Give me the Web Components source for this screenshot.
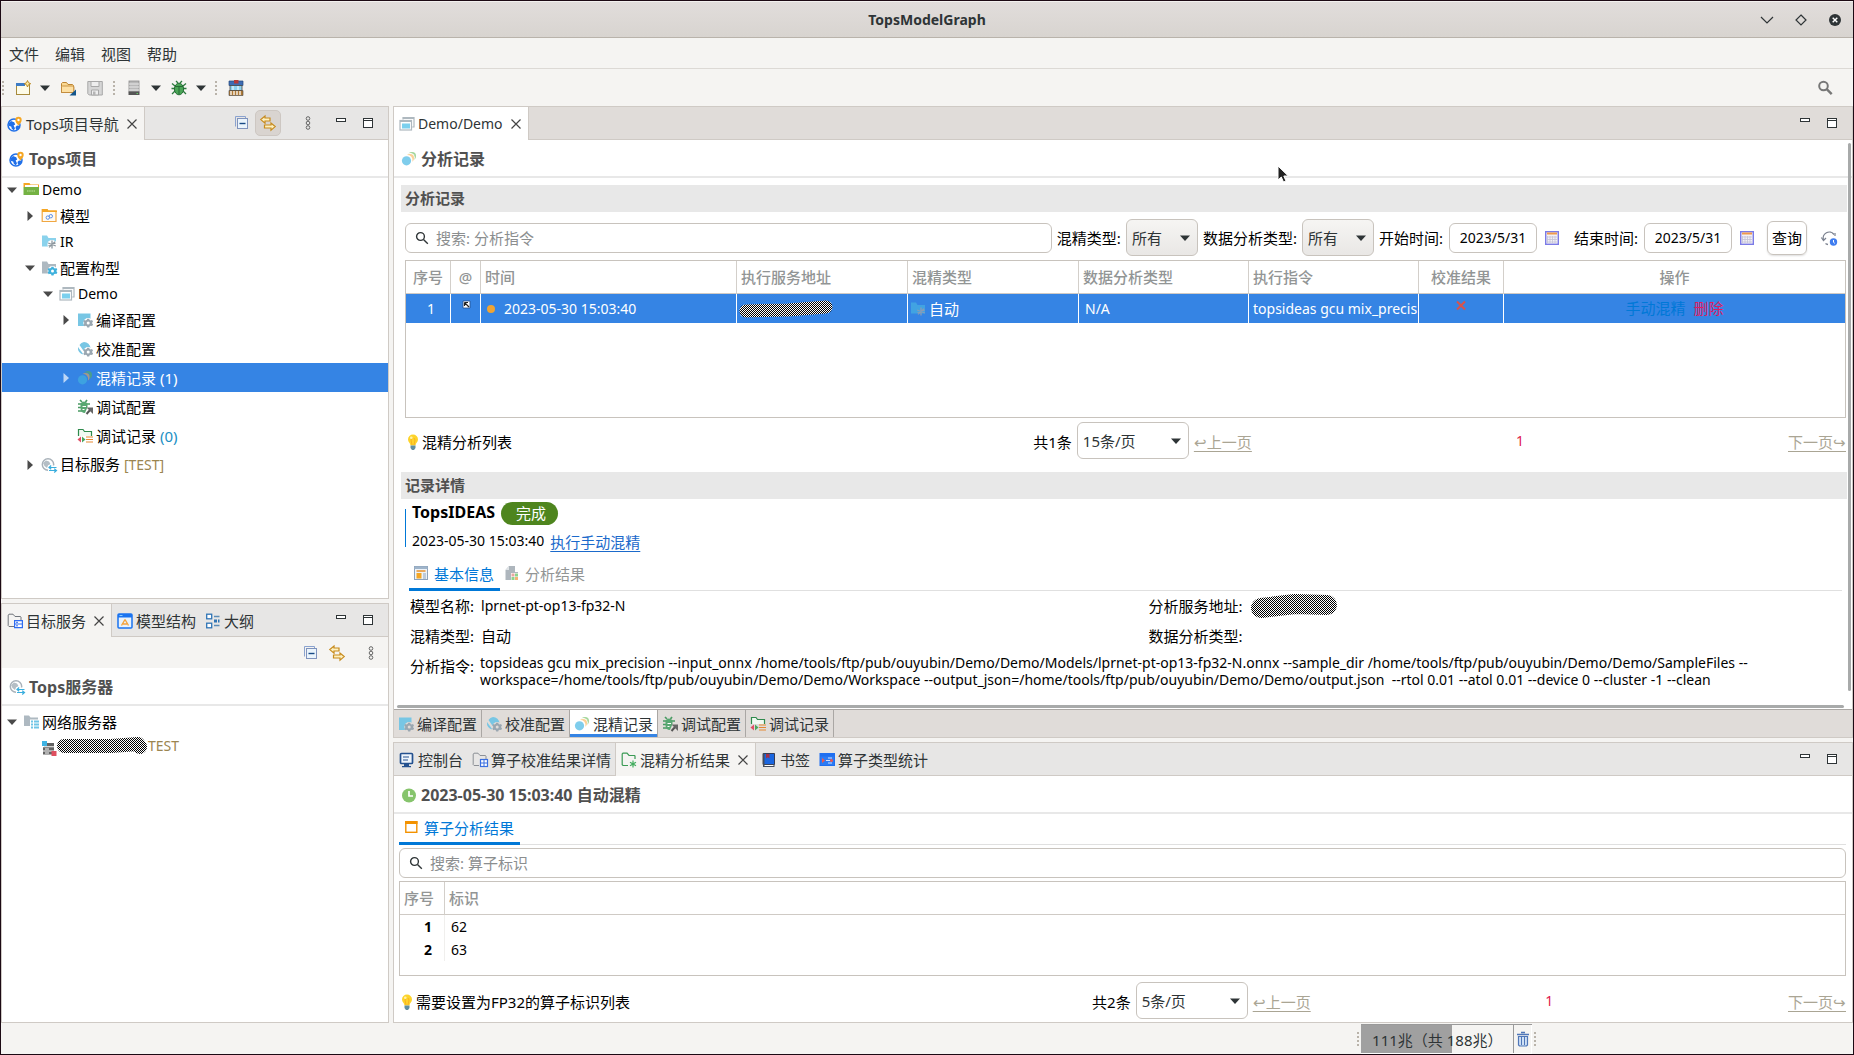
<!DOCTYPE html>
<html lang="zh-CN">
<head>
<meta charset="utf-8">
<title>TopsModelGraph</title>
<style>
html, body { margin: 0; height: 100%; }
body { background: #1c0a14; }
</style>
</head>
<body>
<tops-app></tops-app>
<script>
const SHARED = `
*, *::before, *::after { box-sizing: border-box; }
:host { display: block; box-sizing: border-box; }
button, input, select { font: inherit; color: inherit; margin: 0; }
button { background: none; border: 0; padding: 0; display: inline-flex; align-items: center; white-space: nowrap; }
ul { list-style: none; margin: 0; padding: 0; }
`;
function define(name, css, html, setup) {
  customElements.define(name, class extends HTMLElement {
    constructor() {
      super();
      const t = document.createElement('template');
      t.innerHTML = '<style>' + SHARED + css + '</style>' + (typeof html === 'function' ? '' : html);
      this.attachShadow({ mode: 'open' }).append(t.content.cloneNode(true));
    }
    connectedCallback() {
      if (this.ready) return;
      this.ready = true;
      if (typeof html === 'function') {
        const t = document.createElement('template');
        t.innerHTML = html(this);
        this.shadowRoot.append(t.content.cloneNode(true));
      }
      if (setup) setup(this);
    }
  });
}

const gear = (x, y, c, hole = '#fff') => `<g transform="translate(${x} ${y})"><path d="M-1-4.2h2l.4 1.2 1.2.5 1.2-.6 1 1.6-.8 1v1l.9 1-1 1.6-1.3-.4-1.2.6-.4 1.1h-2l-.4-1.2-1.2-.5-1.2.5-1-1.7.8-1v-1l-.9-1 1-1.6 1.3.5 1.2-.6z" fill="${c}"/><circle r="1.5" fill="${hole}"/></g>`;
const ICONS = {
  globe: `<circle cx="7" cy="9" r="6" fill="#fff" stroke="#1f6fe8" stroke-width="1.5"/><path d="M1.4 7.5 4 5l3.2 1.2 1 2.3-1.6 1 1.4 2.7-1.2 2.3-2-1.8-.6-2.2-2.4-.6z" fill="#1f6fe8"/><path d="M8.500 11l1.500-1.500 2.800.2-1.400 3-2.400 1.300z" fill="#1f6fe8"/><path d="M11.500 9.500C9.600 7.400 8.300 5.800 8.300 4a3.200 3.200 0 0 1 6.400 0c0 1.800-1.400 3.400-3.200 5.500z" fill="#f5a623"/><circle cx="11.500" cy="4" r="1.200" fill="#fff"/>`,
  close: `<path d="M3.500 3.500l9 9M12.500 3.500l-9 9" stroke="#444" stroke-width="1.200" fill="none"/>`,
  collapse: `<path d="M1.500 11.500v-10h10v2" fill="none" stroke="#8ba3cf"/><rect x="3.500" y="3.500" width="10" height="10" fill="#eaf4fc" stroke="#7f93bd"/><path d="M5.500 8.500h6" stroke="#174a86" stroke-width="1.400"/>`,
  link: `<path d="M5 1v2h5v3H5v2.200L.8 4.600z" fill="#fdf0c0" stroke="#c78a1c" stroke-width="1.200"/><path d="M11 8v2H4.500v3H11v2.200l4.200-3.600z" fill="#fdf0c0" stroke="#c78a1c" stroke-width="1.200"/>`,
  dots: `<g fill="none" stroke="#666"><circle cx="8" cy="3.500" r="1.800"/><circle cx="8" cy="8" r="1.800"/><circle cx="8" cy="12.500" r="1.800"/></g>`,
  min: `<rect x="3.500" y="3.500" width="9" height="3" fill="#fff" stroke="#2e3436"/>`,
  max: `<rect x="3.500" y="3.500" width="9" height="9" fill="#fff" stroke="#2e3436"/><path d="M3 5.500h10" stroke="#2e3436"/>`,
  caret: `<path d="M3 5.500h10L8 11z" fill="#2e3436"/>`,
  right: `<path d="M5.500 3v10L11 8z" fill="#4a4a4a"/>`,
  rightsel: `<path d="M5.500 3v10L11 8z" fill="#bdd7f7"/>`,
  down: `<path d="M3 5.500h10L8 11z" fill="#4a4a4a"/>`,
  newwiz: `<rect x="1.500" y="3.500" width="13" height="11" fill="#fdfbe8" stroke="#a78a3c"/><path d="M1 3h9v3H1z" fill="#3d7cc6"/><path d="M12.500.5l1 2.200 2.200 1-2.200 1-1 2.300-1-2.300-2.200-1 2.200-1z" fill="#fdeaa0" stroke="#b5831b" stroke-width=".9"/>`,
  open: `<path d="M1.500 12.500v-9l1-1h4l1.500 2h4.500l1 1v7z" fill="#fbd992" stroke="#bd8432"/><path d="M1.500 6h12v6.500h-12z" fill="#fde0a4"/><path d="M1.500 12.500V6.500l1-.5h10.500l1 .5v6z" fill="none" stroke="#bd8432" stroke-width=".8"/><path d="M16 9.500v6H9.500z" fill="#14568c"/>`,
  save: `<path d="M.8 1.500h14.500v13.500H2.200l-1.400-1.400z" fill="#d6d6d6" stroke="#a8a8a8"/><path d="M4 1.500h8v5H4zM4.500 10h7v5h-7z" fill="#eee" stroke="#a8a8a8"/><path d="M6 11.500h2.500V15H6z" fill="#b5b5b5"/>`,
  server: `<rect x="3" y="1" width="10" height="11" fill="#b9b9b9" stroke="#8c8c8c" stroke-width=".8"/><path d="M3 4h10M3 7h10M3 10h10" stroke="#e9e9e9"/><path d="M2.500 11.500h11V15h-11z" fill="#555"/><path d="M10.500 13.500h1.500" stroke="#6c6"/>`,
  bug: `<path d="M1 3.500l3 2.500M15 3.500l-3 2.500M.5 8.500h3M15.500 8.500h-3M1 14l3-3M15 14l-3-3M5 1l2 2M11 1L9 3" stroke="#2c7a3f" stroke-width="1.300"/><ellipse cx="8" cy="9" rx="4.600" ry="5.800" fill="#4aa556" stroke="#256b35"/><path d="M4 6.500h8M8 7v7" stroke="#256b35"/>`,
  shop: `<path d="M1 1h14v4.500H1z" fill="#3d6cb4" stroke="#27477c" stroke-width=".7"/><path d="M6 0h4.500v3.500H6z" fill="#b23a3a"/><path d="M2 5.500h12v5H2z" fill="#8fd2ef" stroke="#444" stroke-width=".8"/><path d="M5 6v4M10 6v4" stroke="#fff"/><path d="M1 10.500h14v5H1z" fill="#b07a34" stroke="#444" stroke-width=".6"/><path d="M3 11v4M6 11v4M9 11v4M12 11v4" stroke="#fff" stroke-width="1.300"/>`,
  search: `<circle cx="6.500" cy="6.500" r="3.900" fill="none" stroke="#2e3436" stroke-width="1.400"/><path d="M9.500 9.500l4.300 4.300" stroke="#2e3436" stroke-width="1.400"/>`,
  bigsearch: `<circle cx="6.500" cy="6" r="4.300" fill="none" stroke="#777" stroke-width="2"/><path d="M9.700 9.200l5 5" stroke="#777" stroke-width="2.400"/>`,
  proj: `<path d="M.5 1h6l1 1.500H16V5H.5z" fill="#f5a623"/><path d="M2 3h13v2H2z" fill="#fff"/><path d="M.5 5H16v8H.5z" fill="#74b243"/><path d="M4 9h8" stroke="#a7d184" stroke-width="1.500" stroke-dasharray="1.500 .7"/>`,
  model: `<path d="M1.200 13.500V1.500H6L7 3h8v10.500z" fill="#fffaf2" stroke="#f0a742" stroke-width="1.200"/><path d="M1 1h5.500l.8 1.500H16V4H1z" fill="#f5a623"/><circle cx="6.800" cy="9.600" r="1.700" fill="none" stroke="#5a8fe8"/><circle cx="9.800" cy="8.200" r="1.700" fill="none" stroke="#5a8fe8"/>`,
  ir: `<path d="M1 1.500h5L7.500 4H15v8.500H1z" fill="#8ad2ec"/><circle cx="11" cy="10.500" r="4.600" fill="#fff"/><g stroke="#8d989f" stroke-width="1.300"><path d="M11 6.500v8M7.200 9l7.600 3M8 13.400l6-5.800M7.500 11.500l7-2.400"/></g>`,
  irsel: `<path d="M1 1.500h5L7.500 4H15v8.500H1z" fill="#41a3e2"/><g stroke="#8a9cb5" stroke-width="1.300"><path d="M11 6.500v8M7.200 9l7.600 3M8 13.400l6-5.800M7.500 11.500l7-2.400"/></g>`,
  conf: `<path d="M1 1.500h5L7.500 4H15v9.500H1z" fill="#aeb9c1"/><circle cx="11.500" cy="11" r="4.900" fill="#fff"/>${gear(11.5, 11, '#3fb1dd')}`,
  windows: `<path d="M4 3.500V1.500h11v9.500h-1.800" fill="none" stroke="#aeb8bf" stroke-width="1.200"/><path d="M4 2h11" stroke="#aeb8bf" stroke-width="2"/><rect x="1" y="4.500" width="11.500" height="9.500" fill="#fff" stroke="#aeb8bf" stroke-width="1.200"/><path d="M1 5h12" stroke="#aeb8bf" stroke-width="2"/><rect x="3" y="7.500" width="8" height="5" fill="#7cd0ee"/>`,
  compile: `<path d="M1 1.500h12.500V14H1z" fill="#78c6e4"/><circle cx="11.200" cy="11" r="4.900" fill="var(--hole, #fff)"/>${gear(11.2, 11, '#9aa7b1', 'var(--hole, #fff)')}`,
  calib: `<path d="M7 1a6.500 6.500 0 0 1 6.500 6L8 12 2.500 4A6.500 6.500 0 0 1 7 1z" fill="#78c6e4"/><path d="M1 6l5.500 7.500A6.500 6.500 0 0 1 1 6z" fill="#78c6e4"/><circle cx="11.200" cy="11" r="4.900" fill="var(--hole, #fff)"/>${gear(11.2, 11, '#9aa7b1', 'var(--hole, #fff)')}`,
  mix: `<circle cx="11" cy="5" r="4" fill="#a4d69a"/><circle cx="9.200" cy="6.500" r="4.600" fill="#fff"/><circle cx="9" cy="7" r="4" fill="#fbd095"/><circle cx="6.500" cy="9" r="5" fill="#fff"/><circle cx="5.500" cy="9.800" r="4.600" fill="#7fcdec"/>`,
  mixsel: `<circle cx="11" cy="5" r="4" fill="#4a9e8e"/><circle cx="8.600" cy="7" r="4.500" fill="#3584e4"/><circle cx="8.600" cy="7" r="4" fill="#a59a86"/><circle cx="6.200" cy="9" r="4.900" fill="#3584e4"/><circle cx="5.500" cy="9.800" r="4.600" fill="#3da2e0"/>`,
  debug: `<path d="M3 1l2 2M10 1L8.500 3M1 5h12M1 8.500h7M1 12h6" stroke="#4a9a63" stroke-width="1.700"/><path d="M3.500 4.500Q7 .5 10.500 4.500V8L8 14Q3.500 14 3.500 9z" fill="#58a771"/><path d="M5.500 7.500h3.500M5.500 10.500h2" stroke="#fff"/><path d="M9.500 15l4.500-5" stroke="#555" stroke-width="2"/><path d="M9.500 8.500H16V15z" fill="#666"/>`,
  debugrec: `<path d="M1.500 8V1.500H6L7.500 3.500h7V8" fill="#f1faf2" stroke="#2f8a4c" stroke-width="1.200"/><path d="M4 8.500v6L.5 11.500z" fill="#e04f66"/><path d="M5 8.500v6l3.500-3z" fill="#4aa65d"/><path d="M9 9h7M9 11.500h7M9 14h7" stroke="#e58a35" stroke-width="1.200"/>`,
  svc: `<circle cx="7" cy="7.500" r="5.700" fill="#fff" stroke="#a9b2ba" stroke-width="1.500"/><path d="M2 6l3-2.500 3 1L9.500 7 7 8.500 6 11 3.500 9z" fill="#b5bec5"/><path d="M7 8.500h9v7.500H7z" fill="#fff"/><path d="M8 10.500h7.500M8 13.500h7.500M10.200 8.500L8 10.500l2.200 1.800M13.200 11.700l2.300 1.800-2.300 2" stroke="#3aaede" stroke-width="1.200" fill="none"/>`,
  tgt: `<path d="M7 13.500H2l-.8-.8V2l.8-.8h4L8 3.500h5.500l.5.5v3" fill="none" stroke="#70757c"/><g fill="#fff" stroke="#2f6cf0" stroke-width="1.200"><path d="M7.600 7.600h7.800v3.400H7.600zM7.600 11h7.800v3.600H7.600z"/></g><path d="M9 9.300h2M9 12.800h2" stroke="#2f6cf0"/>`,
  struct: `<rect x="1" y="1" width="14" height="14" rx="1" fill="#e8f3fd" stroke="#1a73f0" stroke-width="1.500"/><path d="M1 1h14v3.500H1z" fill="#1a73f0"/><path d="M2.500 2.500h3" stroke="#8cf"/><path d="M8 6.500l3.500 6M8 6.500l-3.500 6M6 11h4" stroke="#f5a33c" stroke-width="1.400" fill="none"/>`,
  outline: `<g fill="#fff" stroke="#2f74b5" stroke-width="1.300"><rect x="1.700" y="1.200" width="5" height="4.600"/><rect x="1.700" y="10.200" width="5" height="4.600"/></g><path d="M9 3.500h5.500M9 12.500h5.500" stroke="#5c8db8" stroke-width="1.300"/><path d="M9 8h5.500" stroke="#2f74b5" stroke-width="3" stroke-dasharray="3 1"/>`,
  net: `<path d="M1 1.500h5L7.500 3.500H15V12H1z" fill="#aeb9c1"/><path d="M7 5.500h9V16H7z" fill="#fff"/><path d="M8 7.500h2M8 10.500h2M8 13.500h2M11 7.500h5M11 10.500h5M11 13.500h5" stroke="#6fc5e6" stroke-width="1.800"/>`,
  host: `<path d="M3 3h10v3.300H3zM2 7.300h11v3.200H2zM2 11.500h11v3H2z" fill="#636363"/><path d="M4 9h4M4 13h4" stroke="#fff"/><path d="M1 1h5v5H1z" fill="#3fb3e3"/><path d="M10.500 11h5v5h-5z" fill="#de4f5f"/>`,
  console: `<rect x="1.500" y="1.500" width="12" height="10" rx="1" fill="#eef5fc" stroke="#24518f" stroke-width="1.700"/><path d="M4 5h6M4 8h5" stroke="#24518f"/><path d="M5 12h5v2h2v1.300H3V14h2z" fill="#24518f"/>`,
  calres: `<path d="M7 13.500H2l-.8-.8V2l.8-.8h4L8 3.500h5.500l.5.5v3" fill="none" stroke="#8c9096"/><rect x="8.500" y="7.500" width="7" height="7" fill="#fff" stroke="#3b6fe0" stroke-width="1.200"/><path d="M12 7.500v7M8.500 11h7" stroke="#3b6fe0"/>`,
  mixres: `<path d="M7 13.500H2l-.8-.8V2l.8-.8h4L8 3.500h5.500l.5.5v3" fill="none" stroke="#3a9a54" stroke-width="1.200"/><path d="M12 8.500v7M9 10.200l6 3.600M15 10.200l-6 3.600" stroke="#43ad5f" stroke-width="1.200"/>`,
  book: `<path d="M2 1.500h11.500v11H2z" fill="#1a66e0" stroke="#223" stroke-width=".8"/><path d="M2 1v14h11.500v-2.500H3.500V1z" fill="#444c5c"/><path d="M3.500 13.500h9" stroke="#fff"/><path d="M5 2v4.500l1.700-1.200L8.500 6.500V2z" fill="#a33048"/>`,
  stats: `<path d="M.5 1H16v13H.5z" fill="#1f6ff0"/><path d="M1.500 4.500h13.500v8.500H1.500z" fill="#2d7bf3"/><path d="M3 6L6 8.500 3 11z" fill="#f0574f"/><path d="M7 8.500h4M9 6h4M9 11h4" stroke="#cfe2ff"/><circle cx="12.500" cy="8.500" r="1.500" fill="#f0574f"/>`,
  clock: `<circle cx="8" cy="8.500" r="7" fill="#86c46c"/><path d="M8 4v5h4" stroke="#fff" stroke-width="1.700" fill="none"/>`,
  orange: `<rect x="2.800" y="2.800" width="11" height="10.500" fill="#fff" stroke="#f39200" stroke-width="1.400"/><path d="M2 2h12.500v3H2z" fill="#f39200"/>`,
  news: `<rect x="1.500" y="1.500" width="13" height="13" fill="#eef3f8" stroke="#8ea3bb"/><path d="M1.500 1.500h13v2.500h-13z" fill="#9fb4ca"/><path d="M3.500 6h9" stroke="#e8922b" stroke-width="1.500"/><path d="M3.500 8h5v5.500h-5z" fill="#f5a623"/><path d="M10 9h3M10 11h3M10 13h3" stroke="#8ea3bb"/>`,
  result: `<path d="M5 1h6v6h3v8H1.500V5z" fill="#aeb6bd"/><path d="M5 1v4H1.500z" fill="#dfe3e6"/><path d="M7 8h7v7H7z" fill="#fff"/><path d="M7.500 8.500h3v3h-3z" fill="#e9a6a0"/><path d="M11 8.500h3v3h-3zM7.500 12h3v3h-3z" fill="#8fd28c"/><path d="M11 12h3v3h-3z" fill="#f3b277"/>`,
  cal: `<rect x="1.700" y="1.700" width="12.600" height="12.600" fill="#f3f1f5" stroke="#7b7be6" stroke-width="1.400"/><path d="M3 3.500h10" stroke="#ef9a4b" stroke-width="2"/><path d="M3.500 6v7M6 6v7M8.500 6v7M11 6v7M3 7h10M3 9.500h10M3 12h10" stroke="#c3c3d6" stroke-width=".8"/>`,
  refresh: `<path d="M2.500 10A6 6 0 0 1 13 4.500M4.500 13.500q1 .8 2.500 1" fill="none" stroke="#7b8290" stroke-width="1.300"/><path d="M.3 7.500l2.200 3 2.500-2.500M14 3v3" fill="none" stroke="#7b8290" stroke-width="1.200"/><circle cx="12.500" cy="12" r="3.700" fill="#3f7df0"/><path d="M12.500 10v2.300l1.300 1" stroke="#fff" fill="none"/>`,
  bulb: `<path d="M8 .5a5 5 0 0 1 5 5c0 2.500-2.300 3.500-2.500 6h-5C5.300 9 3 8 3 5.500a5 5 0 0 1 5-5z" fill="#fdd32a"/><path d="M7 4l-1 2 1 5M9 4l1 2-1 5" fill="none" stroke="#f7a91e" stroke-width=".8"/><circle cx="6.300" cy="3.800" r="1.300" fill="#fff3a8"/><path d="M5.500 11.500h5v2.500L9 16H7l-1.500-2z" fill="#5f8ea1"/>`,
  badge: `<path d="M5 3h7v7H5z" fill="#fff" stroke="#234f8c" stroke-width=".8"/><path d="M6.500 4.500H10M6.500 4.500V8M6.500 4.500l4.500 4.500" stroke="#222" stroke-width="1.200"/>`,
  dot: `<circle cx="8" cy="8" r="4" fill="#f0a433"/>`,
  cross: `<path d="M4 3.500l8 8M12 3.500l-8 8" stroke="#d9534b" stroke-width="2"/>`,
  trash: `<path d="M2 3.500h12M6 1.500h4" stroke="#4f76b8" stroke-width="1.500"/><path d="M3.500 5.500h9V14l-1 1h-7l-1-1z" fill="#cfe0f5" stroke="#4f76b8" stroke-width="1.200"/><path d="M6.500 6v8M9.500 6v8" stroke="#4f76b8"/>`,
  wmin: `<path d="M2 5l6 6 6-6" fill="none" stroke="#2e3436" stroke-width="1.200"/>`,
  wmax: `<path d="M8 3l5 5-5 5-5-5z" fill="none" stroke="#2e3436" stroke-width="1.200"/>`,
  wclose: `<circle cx="8" cy="8" r="6" fill="#2e3436"/><path d="M5.700 5.700l4.600 4.600M10.300 5.700l-4.600 4.600" stroke="#fff" stroke-width="1.400"/>`
};
define('ui-icon', `:host { display: inline-block; width: 16px; height: 16px; flex: none; }
svg { display: block; width: 100%; height: 100%; overflow: visible; }`,
  el => `<svg viewBox="0 0 16 16" aria-hidden="true">${ICONS[el.getAttribute('name')] || ''}</svg>`);

let blobId = 0;
const BLOBS = {
  cell: { w: 96, h: 20, d: 'M8 12L50 11 88 8', s: 13 },
  field: { w: 88, h: 28, d: 'M11 16L45 12 77 13', s: 20 },
  host: { w: 92, h: 20, d: 'M8 10H55L82 8 84 11', s: 14 }
};
define('redacted-mark', `:host { display: block; flex: none; } svg { display: block; }`, el => {
  const b = BLOBS[el.getAttribute('kind')], id = 'p' + blobId++;
  return `<svg width="${b.w}" height="${b.h}" aria-hidden="true"><defs><pattern id="${id}" width="2" height="2" patternUnits="userSpaceOnUse"><path d="M0 0h2v2H0z" fill="#fff"/><path d="M0 0h1v1H0zM1 1h1v1H1z" fill="#000" shape-rendering="crispEdges"/></pattern></defs><path d="${b.d}" fill="none" stroke="url(#${id})" stroke-width="${b.s}" stroke-linecap="round" stroke-linejoin="round"/></svg>`;
});

define('title-bar', `
:host { display: grid; grid-template-columns: 1fr auto 1fr; align-items: center; height: 37px; background: linear-gradient(#e1dddb, #d8d4d0); border-top: 1px solid #f3f1ef; border-bottom: 1px solid #b9b3ab; }
h1 { grid-column: 2; margin: 0; font-size: 14px; line-height: 20px; color: #2e3436; }
div { justify-self: end; display: flex; gap: 18px; padding-right: 10px; }`,
`<h1>TopsModelGraph</h1><div><button aria-label="最小化"><ui-icon name="wmin"></ui-icon></button><button aria-label="最大化"><ui-icon name="wmax"></ui-icon></button><button aria-label="关闭"><ui-icon name="wclose"></ui-icon></button></div>`);

define('menu-bar', `
:host { display: flex; align-items: center; height: 31px; padding-top: 2px; border-bottom: 1px solid #dcd9d5; color: #2e3436; }
button { padding: 0 8px; line-height: 22px; }`,
`<button>文件</button><button>编辑</button><button>视图</button><button>帮助</button>`);

define('drag-handle', `:host { width: 2px; height: 14px; flex: none; background: repeating-linear-gradient(#b9b3aa 0 2px, transparent 2px 4px); }`, ``);

define('tool-bar', `
:host { display: flex; align-items: center; height: 37px; padding: 0 20px 0 1px; }
.group { display: flex; align-items: center; padding: 0 10px 0 11px; }
.group.run { padding-right: 6px; }
.group > button { margin-right: 11px; }
.group > button.menu { margin: 0 7px 0 -5px; }
.group > :last-child { margin-right: 0 !important; }
.find { margin-left: auto; }`,
`<drag-handle></drag-handle><div class="group"><button aria-label="新建"><ui-icon name="newwiz"></ui-icon></button><button class="menu" aria-label="新建菜单"><ui-icon name="caret"></ui-icon></button><button aria-label="打开"><ui-icon name="open"></ui-icon></button><button aria-label="保存"><ui-icon name="save"></ui-icon></button></div>
<drag-handle></drag-handle><div class="group run"><button aria-label="运行"><ui-icon name="server"></ui-icon></button><button class="menu" aria-label="运行菜单"><ui-icon name="caret"></ui-icon></button><button aria-label="调试"><ui-icon name="bug"></ui-icon></button><button class="menu" aria-label="调试菜单"><ui-icon name="caret"></ui-icon></button></div>
<drag-handle></drag-handle><div class="group"><button aria-label="商店"><ui-icon name="shop"></ui-icon></button></div>
<button class="find" aria-label="搜索"><ui-icon name="bigsearch"></ui-icon></button>`);

define('view-tab', `
:host { display: flex; align-items: center; gap: 5px; padding: 2px 4px 0 5px; color: #2e3436; }
:host([latin]) { font-size: 14px; }
:host([selected]) { background: var(--tab-on, #f5f4f2); border-right: 1px solid #cfcac5; margin-bottom: -1px; padding-bottom: 1px; }
:host([selected][mid]) { border-left: 1px solid #cfcac5; }
.t { gap: 3px; line-height: 22px; }`,
  el => `<button class="t" role="tab" aria-selected="${el.hasAttribute('selected')}"><ui-icon name="${el.getAttribute('icon')}"></ui-icon><slot></slot></button>` +
    (el.hasAttribute('selected') ? `<button aria-label="关闭标签"><ui-icon name="close"></ui-icon></button>` : ''));

define('tab-folder', `
:host { display: flex; flex-direction: column; border: 1px solid #cfcac5; min-height: 0; min-width: 0; background: #fff; position: relative; }
header { display: flex; height: 33px; flex: none; background: var(--bar, #e7e6e5); border-bottom: 1px solid #cfcac5; }
.tabs { display: flex; }
.tools { margin-left: auto; display: flex; align-items: center; padding-right: 12px; gap: 11px; }
.body { flex: 1; min-height: 0; display: flex; flex-direction: column; }`,
`<header><div class="tabs" role="tablist"><slot name="tab"></slot></div><div class="tools"><slot name="tool"></slot><button aria-label="最小化视图"><ui-icon name="min"></ui-icon></button><button aria-label="最大化视图"><ui-icon name="max"></ui-icon></button></div></header><div class="body"><slot></slot></div>`);

define('form-title', `
:host { display: flex; align-items: center; gap: 4px; height: 38px; flex: none; padding: 2px 7px 0; border-bottom: 2px solid #e8e8e8; }
h2 { margin: 0; font-size: 16px; line-height: 24px; color: #505050; }`,
  el => `<ui-icon name="${el.getAttribute('icon')}"></ui-icon><h2><slot></slot></h2>`);

define('tree-row', `
:host { display: flex; align-items: center; gap: 2px; height: 29px; color: #000; padding-left: calc(2px + 18px * var(--lv, 0)); white-space: pre; }
:host([latin]) { height: 23px; font-size: 14px; }
:host([selected]) { background: #3584e4; color: #fff; }
.x { width: 16px; height: 16px; margin-right: 1px; flex: none; }
span { margin-left: 1px; line-height: 22px; }`,
  el => `${el.getAttribute('open') ? `<ui-icon class="x" name="${el.getAttribute('open')}"></ui-icon>` : '<i class="x"></i>'}<ui-icon name="${el.getAttribute('icon')}"></ui-icon><span><slot></slot></span>`,
  el => { el.setAttribute('role', 'treeitem'); el.style.setProperty('--lv', el.getAttribute('level') || 0); });

define('project-view', `
:host { display: flex; flex: 493 1 0; min-height: 0; } tab-folder { flex: 1; }
.on { background: #d9d4d0; border: 1px solid #cdc7c2; border-radius: 5px; padding: 4px; margin: 0 8px 0 -6px; }
.dots { margin-right: 6px; }
em { font-style: normal; color: #1a8fc4; } i { font-style: normal; color: #9b8550; font-size: 14px; }`,
`<tab-folder><view-tab slot="tab" icon="globe" selected>Tops项目导航</view-tab>
<button slot="tool" aria-label="全部折叠"><ui-icon name="collapse"></ui-icon></button><button slot="tool" class="on" aria-label="链接编辑器" aria-pressed="true"><ui-icon name="link"></ui-icon></button><button slot="tool" class="dots" aria-label="视图菜单"><ui-icon name="dots"></ui-icon></button>
<form-title icon="globe">Tops项目</form-title>
<div role="tree">
<tree-row latin open="down" icon="proj">Demo</tree-row>
<tree-row level="1" open="right" icon="model">模型</tree-row>
<tree-row latin level="1" icon="ir">IR</tree-row>
<tree-row level="1" open="down" icon="conf">配置构型</tree-row>
<tree-row latin level="2" open="down" icon="windows">Demo</tree-row>
<tree-row level="3" open="right" icon="compile">编译配置</tree-row>
<tree-row level="3" icon="calib">校准配置</tree-row>
<tree-row level="3" selected open="rightsel" icon="mixsel">混精记录 (1)</tree-row>
<tree-row level="3" icon="debug">调试配置</tree-row>
<tree-row level="3" icon="debugrec">调试记录 <em>(0)</em></tree-row>
<tree-row level="1" open="right" icon="svc">目标服务 <i>[TEST]</i></tree-row>
</div></tab-folder>`);

define('server-view', `
:host { display: flex; flex: 420 1 0; min-height: 0; } tab-folder { flex: 1; }
.bar { display: flex; justify-content: flex-end; align-items: center; gap: 10px; height: 31px; flex: none; background: #f5f4f2; padding: 0 9px; }
.bar > :last-child { margin-left: 8px; }
[role=tree] { padding-top: 1px; }
i { font-style: normal; color: #9b8550; }
tree-row span { display: inline-flex; align-items: center; margin-left: -4px; padding-top: 1px; }`,
`<tab-folder><view-tab slot="tab" icon="tgt" selected>目标服务</view-tab><view-tab slot="tab" icon="struct">模型结构</view-tab><view-tab slot="tab" icon="outline">大纲</view-tab>
<div class="bar"><button aria-label="全部折叠"><ui-icon name="collapse"></ui-icon></button><button aria-label="链接编辑器"><ui-icon name="link"></ui-icon></button><button aria-label="视图菜单"><ui-icon name="dots"></ui-icon></button></div>
<form-title icon="svc">Tops服务器</form-title>
<div role="tree"><tree-row open="down" icon="net">网络服务器</tree-row><tree-row latin level="1" icon="host"><span><redacted-mark kind="host"></redacted-mark><i>TEST</i></span></tree-row></div></tab-folder>`);

define('section-title', `
:host { height: 27px; background: #e8e8e8; padding: 0 4px; flex: none; }
h3 { margin: 0; font-size: 15px; line-height: 27px; color: #505050; }`, `<h3><slot></slot></h3>`);

const SELECT = `
.sel { display: inline-grid; align-items: center; flex: none; }
.sel > * { grid-area: 1 / 1; }
.sel select { appearance: none; width: 100%; height: 37px; border: 1px solid #c8c3bd; border-radius: 6px; background: #fff; padding: 1px 5px 0; color: #2e3436; }
.sel ui-icon { justify-self: end; margin-right: 5px; pointer-events: none; }`;

define('filter-bar', SELECT + `
:host { display: flex; align-items: center; height: 37px; color: #000; white-space: nowrap; }
.find { flex: 1; display: flex; align-items: center; gap: 6px; height: 30px; border: 1px solid #c8c3bd; border-radius: 6px; padding: 0 8px; background: #fff; min-width: 0; }
.find input { border: 0; outline: 0; flex: 1; min-width: 0; padding: 0; background: none; }
input::placeholder { color: #8b8e8f; opacity: 1; }
label { margin: 0 5px; }
.day { margin-right: 6px; }
.sel { width: 72px; } .sel select { background: linear-gradient(#f6f5f3, #e9e7e5); }
.date { width: 88px; height: 30px; font-size: 14px; border: 1px solid #c8c3bd; border-radius: 6px; text-align: center; padding: 0; background: #fff; }
.pick { margin: 0 9px 0 7px; }
.go { height: 34px; border: 1px solid #c8c3bd; border-radius: 6px; padding: 0 4px; box-shadow: 0 1px 2px #0002; margin-left: 3px; }
.re { margin: 0 9px 0 14px; }`,
`<div class="find"><ui-icon name="search"></ui-icon><input type="text" aria-label="搜索分析指令" placeholder="搜索: 分析指令"></div>
<label for="a">混精类型:</label><span class="sel"><select id="a"><option>所有</option></select><ui-icon name="caret"></ui-icon></span>
<label for="b">数据分析类型:</label><span class="sel"><select id="b"><option>所有</option></select><ui-icon name="caret"></ui-icon></span>
<label class="day" for="c">开始时间:</label><input class="date" id="c" value="2023/5/31"><button class="pick" aria-label="选择开始时间"><ui-icon name="cal"></ui-icon></button>
<label class="day" for="d">结束时间:</label><input class="date" id="d" value="2023/5/31"><button class="pick" aria-label="选择结束时间"><ui-icon name="cal"></ui-icon></button>
<button class="go">查询</button><button class="re" aria-label="刷新"><ui-icon name="refresh"></ui-icon></button>`);

const TABLE = `
table { width: 100%; border-collapse: separate; border-spacing: 0; table-layout: fixed; }
th, td { padding: 0 4px; text-align: left; white-space: nowrap; overflow: hidden; border-right: 1px solid #d3cfca; line-height: 22px; }
th { height: 33px; color: #929595; font-weight: 500; border-bottom: 1px solid #cfcac5; }
th:last-child, td:last-child { border-right: 0; }
.c { text-align: center; } .r { text-align: right; }`;

define('record-table', TABLE + `
:host { border: 1px solid #c8c3bd; height: 158px; background: #fff; }
td { height: 29px; background: #3584e4; color: #fff; border-color: #fff; font-size: 14px; }
td.r { padding-right: 15px; }
div { display: flex; align-items: center; gap: 3px; }
td .w { gap: 5px; } .cjk { font-size: 15px; }
div ui-icon { margin-left: -2px; }
td.n { padding: 0 0 0 1px; }
td.na { padding-left: 6px; }
a { text-decoration: none; font-size: 15px; color: #0078d7; } a + a { color: #e01b5d; margin-left: 8px; }
.up ui-icon { display: block; margin: -6px auto 0; }`,
`<table><colgroup><col style="width:45px"><col style="width:30px"><col style="width:256px"><col style="width:171px"><col style="width:171px"><col style="width:170px"><col style="width:170px"><col style="width:85px"><col></colgroup>
<thead><tr><th class="c">序号</th><th class="c">@</th><th>时间</th><th>执行服务地址</th><th>混精类型</th><th>数据分析类型</th><th>执行指令</th><th class="c">校准结果</th><th class="c">操作</th></tr></thead>
<tbody><tr><td class="r">1</td><td class="up"><ui-icon name="badge"></ui-icon></td><td><div class="w"><ui-icon name="dot"></ui-icon>2023-05-30 15:03:40</div></td><td class="n"><redacted-mark kind="cell"></redacted-mark></td><td><div class="cjk"><ui-icon name="irsel"></ui-icon>自动</div></td><td class="na">N/A</td><td>topsideas gcu mix_precision</td><td class="up"><ui-icon name="cross"></ui-icon></td><td class="c"><a href="#mix">手动混精</a><a href="#del">删除</a></td></tr></tbody></table>`);

define('page-nav', SELECT + `
:host { display: flex; align-items: center; height: 37px; flex: none; color: #000; white-space: nowrap; }
.tip { display: flex; align-items: center; gap: 1px; flex: none; width: var(--tip, 44%); }
.tip, label, a { padding-top: 2px; }
label { margin-right: 5px; }
.sel { width: 112px; margin-right: 5px; }
a { color: #aaa594; text-underline-offset: 3px; } b { flex: 1; text-align: center; font-weight: 400; font-size: 14px; color: #e01b4c; }`,
  el => `<div class="tip"><ui-icon name="bulb"></ui-icon><slot></slot></div><label for="s">${el.getAttribute('total')}</label><span class="sel"><select id="s"><option>${el.getAttribute('size')}</option></select><ui-icon name="caret"></ui-icon></span><a href="#prev">↩上一页</a><b>1</b><a href="#next">下一页↪</a>`);

define('sub-tab', `
:host { display: flex; margin-bottom: -1px; color: #929595; border-bottom: 3px solid transparent; }
:host([selected]) { color: #0078d7; border-color: #0078d7; }
button { gap: 5px; padding: 0 6px 0 4px; line-height: 22px; } ui-icon { align-self: flex-start; margin-top: 5px; }`,
  el => `<button role="tab" aria-selected="${el.hasAttribute('selected')}"><ui-icon name="${el.getAttribute('icon')}"></ui-icon><slot></slot></button>`);

define('record-detail', `
:host { color: #000; padding: 3px 5px 0 4px; }
.head { display: flex; gap: 6px; }
.head > i { width: 1px; height: 38px; margin-top: 7px; background: #0078d7; }
.line { display: flex; align-items: center; gap: 6px; font-size: 14px; }
.line strong { font-size: 16px; line-height: 20px; padding-bottom: 3px; }
.pill { background: #4e851e; color: #fff; font-size: 15px; line-height: 23px; border-radius: 12px; padding: 0 12px 0 15px; }
a { color: #1b6acb; font-size: 15px; line-height: 28px; padding-top: 3px; text-underline-offset: 3px; }
.tabs { display: flex; height: 35px; padding: 4px 0 0; margin: 0 0 0 4px; border-bottom: 1px solid #e0e0e0; }
dl { margin: 0; padding: 0 0 0 5px; display: grid; grid-template-columns: 738fr 693fr; }
dl div { display: flex; align-items: center; gap: 7px; height: 30px; }
dl .wide { grid-column: 1 / -1; align-items: flex-start; gap: 6px; height: auto; }
dt { flex: none; line-height: 30px; } dd { margin: 0; }
.l { font-size: 14px; } .wide dd { line-height: 17px; padding-top: 3px; font-size: 14px; }`,
`<div class="head"><i></i><div><div class="line"><strong>TopsIDEAS</strong><span class="pill">完成</span></div><div class="line"><span>2023-05-30 15:03:40</span><a href="#run">执行手动混精</a></div></div></div>
<div class="tabs" role="tablist"><sub-tab icon="news" selected>基本信息</sub-tab><sub-tab icon="result">分析结果</sub-tab></div>
<dl><div><dt>模型名称:</dt><dd class="l">lprnet-pt-op13-fp32-N</dd></div><div><dt>分析服务地址:</dt><dd><redacted-mark kind="field"></redacted-mark></dd></div>
<div><dt>混精类型:</dt><dd>自动</dd></div><div><dt>数据分析类型:</dt><dd></dd></div>
<div class="wide"><dt>分析指令:</dt><dd>topsideas gcu mix_precision --input_onnx /home/tools/ftp/pub/ouyubin/Demo/Demo/Models/lprnet-pt-op13-fp32-N.onnx --sample_dir /home/tools/ftp/pub/ouyubin/Demo/Demo/SampleFiles --<br>workspace=/home/tools/ftp/pub/ouyubin/Demo/Demo/Workspace --output_json=/home/tools/ftp/pub/ouyubin/Demo/Demo/output.json&nbsp; --rtol 0.01 --atol 0.01 --device 0 --cluster -1 --clean</dd></div></dl>`);

define('page-tabs', `
:host { display: flex; height: 28px; flex: none; background: #e0dcd9; border-top: 1px solid #aaa7a4; color: #2e3436; --hole: #e0dcd9; }
button { gap: 3px; padding: 0 4px; border-right: 1px solid #aaa7a4; line-height: 22px; }
.on { background: #fff; box-shadow: inset 0 -3px #3584e4; }`,
`<button><ui-icon name="compile"></ui-icon>编译配置</button><button><ui-icon name="calib"></ui-icon>校准配置</button><button class="on"><ui-icon name="mix"></ui-icon>混精记录</button><button><ui-icon name="debug"></ui-icon>调试配置</button><button><ui-icon name="debugrec"></ui-icon>调试记录</button>`);

define('editor-view', `
:host { display: flex; flex: 632 1 0; min-height: 0; }
tab-folder { flex: 1; --bar: #e0dcd9; --tab-on: #fff; }
.scroll { flex: 1; min-height: 0; position: relative; overflow: hidden; }
.form { padding: 7px 5px 0 7px; }
.rows { padding: 7px 1px 0 4px; display: flex; flex-direction: column; gap: 4px; margin-bottom: 13px; }
.v, .h { position: absolute; background: #a8aaaa; border-radius: 2px; }
.v { right: 1px; top: 3px; width: 3px; bottom: 18px; } .h { left: 3px; right: 8px; bottom: 1px; height: 3px; }
section-title { overflow: hidden; }
page-nav { --tip: 43.6%; }`,
`<tab-folder><view-tab slot="tab" icon="windows" latin selected>Demo/Demo</view-tab>
<div class="scroll"><form-title icon="mix">分析记录</form-title>
<div class="form"><section-title>分析记录</section-title>
<div class="rows"><filter-bar></filter-bar><record-table></record-table><page-nav total="共1条" size="15条/页">混精分析列表</page-nav></div>
<section-title>记录详情</section-title><record-detail></record-detail></div><div class="v"></div><div class="h"></div></div>
<page-tabs></page-tabs></tab-folder>`);

define('operator-table', TABLE + `
:host { border: 1px solid #c8c3bd; flex: 1; min-height: 0; overflow: hidden; }
td { height: 23px; border-color: #f0efed; color: #000; font-size: 14px; padding: 0 6px; }
td.r { padding-right: 12px; font-weight: 700; }`,
`<table><colgroup><col style="width:45px"><col></colgroup><thead><tr><th>序号</th><th>标识</th></tr></thead><tbody><tr><td class="r">1</td><td>62</td></tr><tr><td class="r">2</td><td>63</td></tr></tbody></table>`);

define('result-view', `
:host { display: flex; flex: 281 1 0; min-height: 0; } tab-folder { flex: 1; }
.main { flex: 1; min-height: 0; display: flex; flex-direction: column; padding: 0 6px 3px 5px; }
.tabs { display: flex; height: 31px; flex: none; border-bottom: 1px solid #e0e0e0; margin-bottom: 3px; }
.find { display: flex; align-items: center; gap: 6px; height: 30px; flex: none; border: 1px solid #c8c3bd; border-radius: 6px; padding: 0 8px; margin-bottom: 3px; }
input { border: 0; outline: 0; flex: 1; padding: 0; background: none; }
input::placeholder { color: #8b8e8f; opacity: 1; }
page-nav { --tip: 47.9%; margin-top: 6px; }`,
`<tab-folder><view-tab slot="tab" icon="console">控制台</view-tab><view-tab slot="tab" icon="calres">算子校准结果详情</view-tab><view-tab slot="tab" icon="mixres" selected mid>混精分析结果</view-tab><view-tab slot="tab" icon="book">书签</view-tab><view-tab slot="tab" icon="stats">算子类型统计</view-tab>
<form-title icon="clock">2023-05-30 15:03:40 自动混精</form-title>
<div class="main"><div class="tabs" role="tablist"><sub-tab icon="orange" selected>算子分析结果</sub-tab></div>
<div class="find"><ui-icon name="search"></ui-icon><input type="text" aria-label="搜索算子标识" placeholder="搜索: 算子标识"></div>
<operator-table></operator-table><page-nav total="共2条" size="5条/页">需要设置为FP32的算子标识列表</page-nav></div></tab-folder>`);

define('status-bar', `
:host { display: flex; justify-content: flex-end; align-items: center; gap: 2px; height: 31px; flex: none; padding-right: 17.1%; color: #2e3436; }
.heap { display: flex; height: 30px; border-top: 1px solid #9a9a9a; border-bottom: 1px solid #fff; }
.heap span { width: 153px; display: grid; place-items: center; line-height: 22px; background: linear-gradient(90deg, #a0a0a0 60%, #f5f4f2 60%); border-right: 1px solid #9a9a9a; padding-top: 2px; }
.heap button { padding: 0 0 0 1px; border-right: 1px solid #fff; }`,
`<drag-handle></drag-handle><div class="heap"><span>111兆（共 188兆）</span><button aria-label="运行垃圾回收器"><ui-icon name="trash"></ui-icon></button></div><drag-handle></drag-handle>`);

define('tops-app', `
:host { display: flex; flex-direction: column; height: 100vh; border: 1px solid #1c0a14; background: #f5f4f2; overflow: hidden; position: relative; font: 15px/22px "Noto Sans", "Noto Sans CJK SC", sans-serif; }
main { flex: 1; min-height: 0; display: grid; grid-template-columns: minmax(0, 388fr) minmax(0, 1460fr); column-gap: 4px; }
.col { display: flex; flex-direction: column; gap: 4px; min-height: 0; }
.pointer { position: absolute; left: 1276px; top: 164px; width: 13px; height: 20px; }`,
`<title-bar></title-bar><menu-bar></menu-bar><tool-bar></tool-bar>
<main><div class="col"><project-view></project-view><server-view></server-view></div><div class="col"><editor-view></editor-view><result-view></result-view></div></main>
<status-bar></status-bar>
<svg class="pointer" viewBox="0 0 13 20" aria-hidden="true"><path d="M1 1v14l3.300-3 2.200 5 2.500-1-2.200-5h4.500z" fill="#222" stroke="#fff"/></svg>`);
</script>
</body>
</html>
